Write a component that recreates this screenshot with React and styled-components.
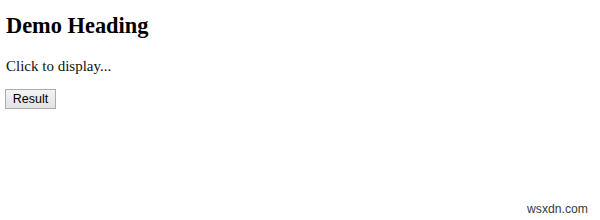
import React from 'react';
import styled, { createGlobalStyle } from 'styled-components';

const GlobalStyle = createGlobalStyle`
  html, body {
    margin: 0;
    padding: 0;
    background: #ffffff;
  }
`;

const App = () => {
  return (
    <Page>
      <GlobalStyle />
      <Heading>Demo Heading</Heading>
      <Text>Click to display...</Text>
      <Button type="button">Result</Button>
      <Watermark>wsxdn.com</Watermark>
    </Page>
  );
};

const Page = styled.div`
  position: relative;
  box-sizing: border-box;
  width: 600px;
  height: 220px;
  padding: 13px 6px 0;
  font-family: "Liberation Serif", "Times New Roman", serif;
  color: #000;
  overflow: hidden;
`;

const Heading = styled.h2`
  margin: 0;
  font-size: 22.4px;
  line-height: 26px;
  font-weight: bold;
`;

const Text = styled.p`
  margin: 18px 0 0;
  font-size: 15px;
  line-height: 18px;
  color: #111;
`;

const Button = styled.button`
  display: block;
  box-sizing: border-box;
  margin: 14px 0 0 -1px;
  width: 51px;
  height: 20px;
  padding: 0;
  font-family: "Liberation Sans", Arial, sans-serif;
  font-size: 12.5px;
  line-height: 18px;
  color: #000;
  background: linear-gradient(#f3f3f3, #e3e3e3);
  border: 1px solid #acacac;
  border-radius: 0;
`;

const Watermark = styled.div`
  position: absolute;
  right: 12px;
  bottom: 4px;
  font-family: "Liberation Sans", Arial, sans-serif;
  font-size: 12.2px;
  line-height: 14px;
  color: #3a3a3a;
`;

export default App;
